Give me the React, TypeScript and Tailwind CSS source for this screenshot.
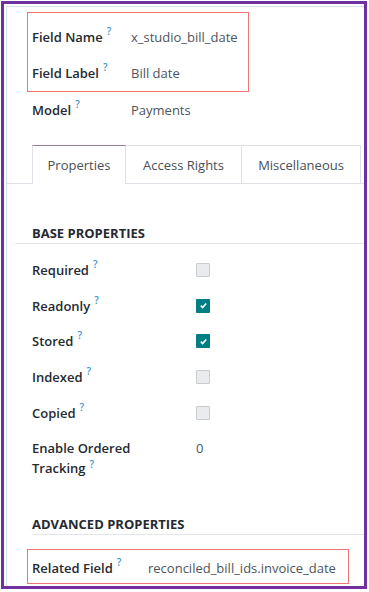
import React from "react";

type RowProps = { label: string; children?: React.ReactNode };

function Help({ low }: { low?: boolean }) {
  return (
    <span
      className={
        low
          ? "relative top-[-5px] ml-[4px] inline-block align-baseline text-[10px] font-semibold leading-none text-[#3a98cf]"
          : "relative top-[-7px] ml-[4px] inline-block align-baseline text-[10px] font-semibold leading-none text-[#3a98cf]"
      }
    >
      ?
    </span>
  );
}

function Check({ on }: { on?: boolean }) {
  if (on) {
    return (
      <span className="flex h-[14px] w-[14px] items-center justify-center rounded-[1px] bg-[#017e84]">
        <svg width="9" height="9" viewBox="0 0 10 10">
          <path d="M2 5.2l2 2 4-4.4" fill="none" stroke="white" strokeWidth="1.8" />
        </svg>
      </span>
    );
  }
  return <span className="block h-[14px] w-[14px] rounded-[1px] border border-[#c8ccd2] bg-[#e9ebef]" />;
}

function PropRow({ label, children }: RowProps) {
  return (
    <div className="flex h-[35.75px] items-center pl-[25px]">
      <div className="w-[164px] font-semibold text-[#262a30]">
        {label}
        <Help />
      </div>
      {children}
    </div>
  );
}

export default function App() {
  return (
    <div className="h-[592px] w-[369px] bg-white pl-[1px] pt-[1px] font-['Open_Sans',sans-serif] text-[13px] leading-[20px]">
      <div className="h-[588px] w-[366px] border-[3px] border-[#7030a0] pl-[2px] pt-[2px]">
        <div className="h-full border-l border-t border-[#d9dce1]">
          {/* field identity */}
          <div className="ml-[20px] mt-[5px] w-[222px] border border-[#f07474] pl-[4px] pt-[6px]">
            <div className="flex h-[36px] items-center">
              <div className="w-[99px] font-semibold text-[#262a30]">
                Field Name
                <Help />
              </div>
              <div className="text-[#4f545c]">x_studio_bill_date</div>
            </div>
            <div className="flex h-[36px] items-center">
              <div className="w-[99px] font-semibold text-[#262a30]">
                Field Label
                <Help />
              </div>
              <div className="text-[#4f545c]">Bill date</div>
            </div>
          </div>
          <div className="flex h-[36px] items-center pl-[25px]">
            <div className="w-[99px] font-semibold text-[#262a30]">
              Model
              <Help />
            </div>
            <div className="text-[#4f545c]">Payments</div>
          </div>

          {/* tabs */}
          <div className="mt-[17px] flex border-b border-[#dee2e6] pl-[25px]">
            <div className="mb-[-1px] flex h-[39px] w-[94px] items-center justify-center border-l border-r border-t border-l-[#dee2e6] border-r-[#dee2e6] border-t-[#9a7896] bg-white pb-[1px] text-[#4a4f57]">
              Properties
            </div>
            <div className="flex h-[38px] w-[116px] items-center justify-center border-r border-t border-[#dee2e6] text-[#4a4f57]">
              Access Rights
            </div>
            <div className="flex h-[38px] w-[119px] items-center justify-center border-r border-t border-[#dee2e6] text-[#4a4f57]">
              Miscellaneous
            </div>
          </div>

          {/* base properties */}
          <div className="ml-[8px] mt-[39px] h-[21px] border-b border-[#e3e5e9] pl-[17px] font-bold text-[#262a30]">
            BASE PROPERTIES
          </div>
          <div className="mt-[8px]">
            <PropRow label="Required">
              <Check />
            </PropRow>
            <PropRow label="Readonly">
              <Check on />
            </PropRow>
            <PropRow label="Stored">
              <Check on />
            </PropRow>
            <PropRow label="Indexed">
              <Check />
            </PropRow>
            <PropRow label="Copied">
              <Check />
            </PropRow>
            <div className="flex pl-[25px] pt-[7px]">
              <div className="w-[164px] font-semibold text-[#262a30]">
                <div>Enable Ordered</div>
                <div>
                  Tracking
                  <Help low />
                </div>
              </div>
              <div className="text-[#4f545c]">0</div>
            </div>
          </div>

          {/* advanced properties */}
          <div className="ml-[25px] mt-[36px] h-[21px] border-b border-[#e3e5e9] font-bold text-[#262a30]">
            ADVANCED PROPERTIES
          </div>
          <div className="ml-[20px] mt-[14px] flex h-[35px] w-[322px] items-center border border-[#f07474] pl-[4px] pt-[3px]">
            <div className="w-[116px] font-semibold text-[#262a30]">
              Related Field
              <Help />
            </div>
            <div className="text-[#4f545c]">reconciled_bill_ids.invoice_date</div>
          </div>
        </div>
      </div>
    </div>
  );
}
